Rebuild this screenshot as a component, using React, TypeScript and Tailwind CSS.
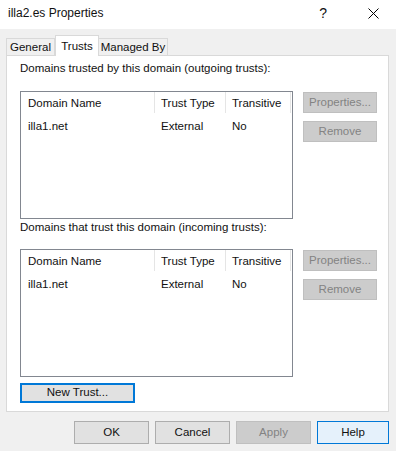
const columns = [
  { label: "Domain Name", width: "w-[134px]", pad: "pl-[7px]" },
  { label: "Trust Type", width: "w-[71px]", pad: "pl-[6px]" },
  { label: "Transitive", width: "w-[65px]", pad: "pl-[6px]" },
];

const trusts = [{ name: "illa1.net", type: "External", transitive: "No" }];

function TrustList() {
  return (
    <div className="h-[128px] w-[273px] border border-[#828790] bg-white">
      <div className="flex h-[21px] items-center">
        {columns.map((col) => (
          <div
            key={col.label}
            className={`${col.width} ${col.pad} flex h-full items-center border-r border-[#e5e5e5] pt-[2px]`}
          >
            {col.label}
          </div>
        ))}
      </div>
      {trusts.map((t) => (
        <div key={t.name} className="mt-[4px] flex h-[20px] items-center">
          <div className="w-[134px] pl-[7px]">{t.name}</div>
          <div className="w-[71px] pl-[6px]">{t.type}</div>
          <div className="w-[65px] pl-[6px]">{t.transitive}</div>
        </div>
      ))}
    </div>
  );
}

function DisabledButton({ label }: { label: string }) {
  return (
    <div className="flex h-[21px] w-[74px] items-center justify-center border border-[#bfbfbf] bg-[#cccccc] text-[#838383]">
      {label}
    </div>
  );
}

function TrustSection() {
  return (
    <div className="flex">
      <TrustList />
      <div className="ml-[10px] mt-[1px] flex flex-col gap-[8px]">
        <DisabledButton label="Properties..." />
        <DisabledButton label="Remove" />
      </div>
    </div>
  );
}

export default function App() {
  return (
    <div
      className="flex h-[451px] w-[396px] flex-col bg-[#f0f0f0] text-[11.5px] text-[#111]"
      style={{ fontFamily: '"Liberation Sans", Arial, sans-serif' }}
    >
      {/* title bar */}
      <div className="flex h-[29px] items-center bg-white pl-[8px] text-[12px]">
        <span className="mb-[3px]">illa2.es Properties</span>
        <span className="mb-[3px] ml-auto mr-[41px] text-[14px]">?</span>
        <svg
          width="11"
          height="11"
          viewBox="0 0 11 11"
          className="mb-[3px] mr-[17px]"
        >
          <path d="M0.5 0.5 L10.5 10.5 M10.5 0.5 L0.5 10.5" stroke="#000" strokeWidth="1" />
        </svg>
      </div>

      {/* tabs */}
      <div className="flex h-[26px] items-end pl-[6px]">
        <div className="flex h-[17px] w-[49px] items-center justify-center border border-b-0 border-[#d9d9d9] bg-[#f0f0f0] pt-[2px]">
          General
        </div>
        <div className="relative z-10 -mb-px flex h-[21px] w-[44px] items-start justify-center border border-b-0 border-[#d9d9d9] bg-white pt-[2px]">
          Trusts
        </div>
        <div className="flex h-[17px] w-[69px] items-center justify-center border border-b-0 border-l-0 border-[#d9d9d9] bg-[#f0f0f0] pt-[2px]">
          Managed By
        </div>
      </div>

      {/* tab panel */}
      <div className="ml-[6px] flex h-[357px] w-[383px] flex-col border border-[#d9d9d9] bg-white pl-[13px]">
        <div className="mt-[5px] h-[15px] leading-[15px]">
          Domains trusted by this domain (outgoing trusts):
        </div>
        <div className="mt-[15px]">
          <TrustSection />
        </div>
        <div className="mt-[1px] h-[15px] leading-[15px]">
          Domains that trust this domain (incoming trusts):
        </div>
        <div className="mt-[14px]">
          <TrustSection />
        </div>
        <div className="mt-[6px] flex h-[20px] w-[115px] items-center justify-center border-2 border-[#0078d7] bg-[#e1e1e1]">
          New Trust...
        </div>
      </div>

      {/* dialog buttons */}
      <div className="mt-[9px] flex justify-end gap-[6px] pr-[7px]">
        <div className="flex h-[23px] w-[75px] items-center justify-center border border-[#adadad] bg-[#e1e1e1]">
          OK
        </div>
        <div className="flex h-[23px] w-[75px] items-center justify-center border border-[#adadad] bg-[#e1e1e1]">
          Cancel
        </div>
        <div className="flex h-[23px] w-[75px] items-center justify-center border border-[#bfbfbf] bg-[#cccccc] text-[#838383]">
          Apply
        </div>
        <div className="flex h-[23px] w-[72px] items-center justify-center border border-[#0078d7] bg-[#e5f1fb]">
          Help
        </div>
      </div>
    </div>
  );
}
